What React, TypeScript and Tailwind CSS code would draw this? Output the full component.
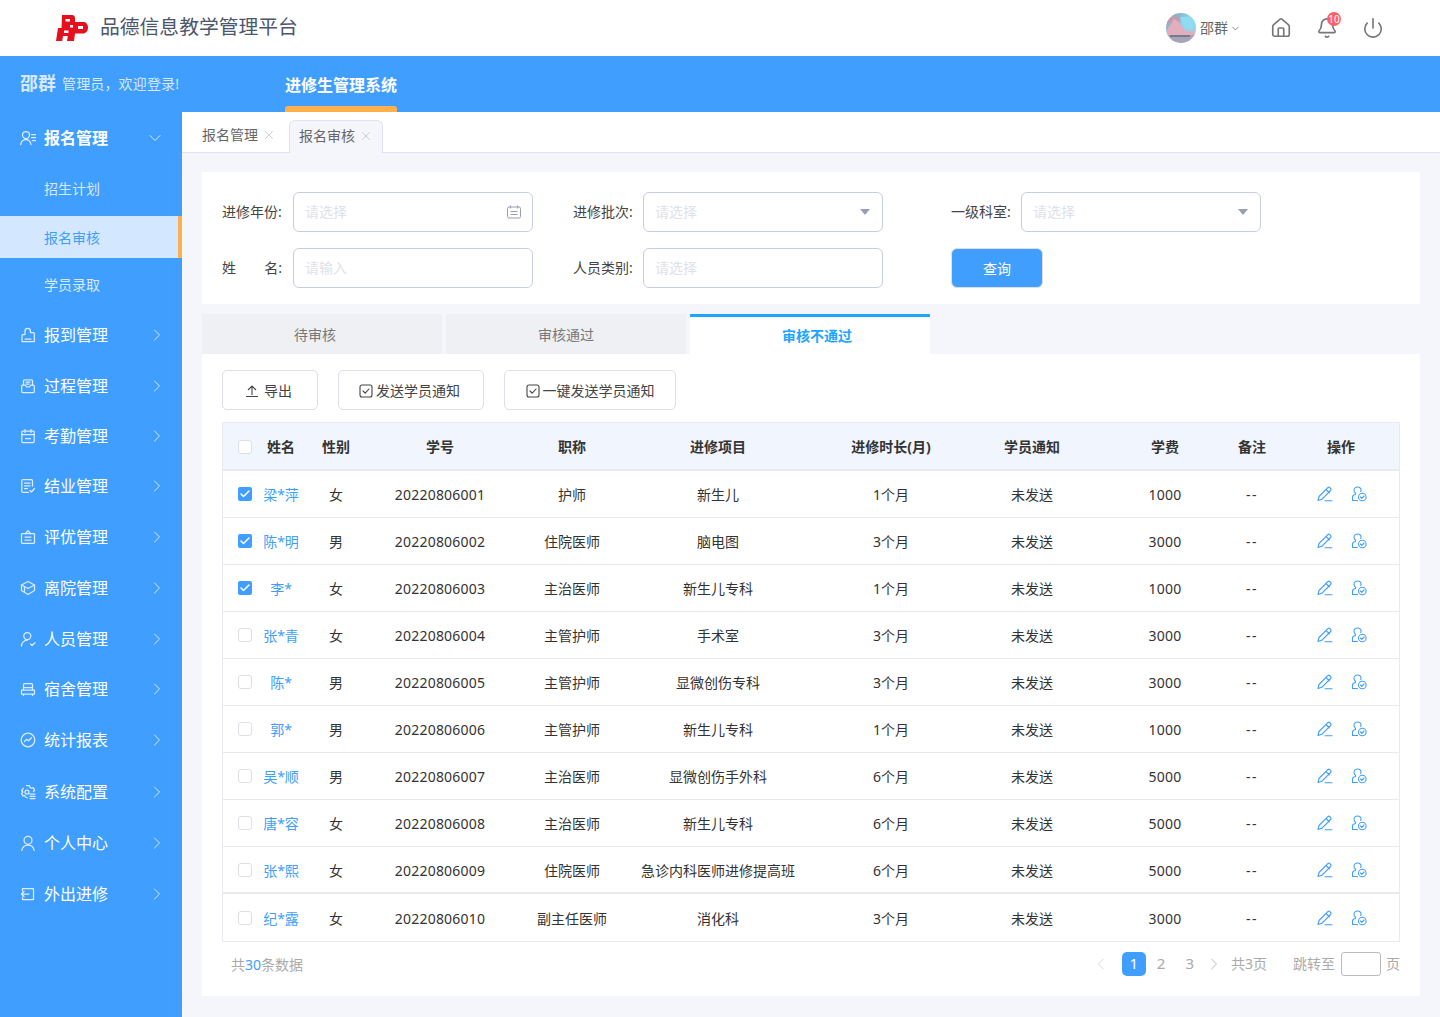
import React from "react";
import { House, Bell, Power, ChevronRight, ChevronDown, X, Check } from "lucide-react";

const grid = "grid grid-cols-[14px_58px_52px_156px_108px_184px_162px_120px_146px_28px_1fr] items-center pl-[15px] text-center";

const rows = [
  ["梁*萍", "女", "20220806001", "护师", "新生儿", "1个月", "未发送", "1000", true],
  ["陈*明", "男", "20220806002", "住院医师", "脑电图", "3个月", "未发送", "3000", true],
  ["李*", "女", "20220806003", "主治医师", "新生儿专科", "1个月", "未发送", "1000", true],
  ["张*青", "女", "20220806004", "主管护师", "手术室", "3个月", "未发送", "3000", false],
  ["陈*", "男", "20220806005", "主管护师", "显微创伤专科", "3个月", "未发送", "3000", false],
  ["郭*", "男", "20220806006", "主管护师", "新生儿专科", "1个月", "未发送", "1000", false],
  ["吴*顺", "男", "20220806007", "主治医师", "显微创伤手外科", "6个月", "未发送", "5000", false],
  ["唐*容", "女", "20220806008", "主治医师", "新生儿专科", "6个月", "未发送", "5000", false],
  ["张*熙", "女", "20220806009", "住院医师", "急诊内科医师进修提高班", "6个月", "未发送", "5000", false],
  ["纪*露", "女", "20220806010", "副主任医师", "消化科", "3个月", "未发送", "3000", false],
] as const;

type IconProps = { d: React.ReactNode };
const SideIcon = ({ d }: IconProps) => (
  <svg viewBox="0 0 16 16" className="h-4 w-4 shrink-0 text-[#dcecff]" fill="none" stroke="currentColor" strokeWidth="1.250" strokeLinecap="round" strokeLinejoin="round">
    {d}
  </svg>
);

const icons: Record<string, React.ReactNode> = {
  报到管理: <path d="M2 14.500V8.500c0-.5.4-.9.9-.9H5V4a2.700 2.700 0 0 1 5.400 0v1.500h3c.5 0 .9.4.9.9v8.100zM5 12h6" />,
  过程管理: <><path d="M3.500 7V2.800c0-.6.5-1 1-1h7c.5 0 1 .4 1 1V7" /><path d="M1.700 8c0-.6.5-1 1-1h2.500l1.300 1.800h3L10.800 7h2.500c.5 0 1 .4 1 1v5.500c0 .6-.5 1-1 1H2.700c-.5 0-1-.4-1-1z" /><path d="M6 4.200h4M6 6h3" /></>,
  考勤管理: <><rect x="1.800" y="3" width="12.400" height="11.500" rx="1" /><path d="M1.800 6.500h12.400M5 1.500v3M11 1.500v3M5.500 10.500h5" /></>,
  结业管理: <><path d="M12.500 8V2.800c0-.7-.5-1.200-1.200-1.200H3c-.7 0-1.200.5-1.200 1.200v10.400c0 .7.500 1.200 1.200 1.200h5.500" /><path d="M4.500 5h5.500M4.500 7.800h5.500M4.500 10.600h3M10 12.500l1.500 1.500 3-3.500" /></>,
  评优管理: <><rect x="1.500" y="4.500" width="13" height="9.800" rx=".8" /><path d="M5.500 4.500 8 1.700l2.500 2.800M5 8h6M5 11h6" /></>,
  离院管理: <><path d="M8 1.500 14.500 5 8 8.500 1.500 5z" /><path d="M1.500 5v5.500L8 14.500l6.500-4V5M4.500 7v4" /></>,
  人员管理: <><circle cx="7.300" cy="5" r="3.500" /><path d="M1.500 15c0-3.200 2.600-5.800 5.800-5.800M10.500 13l1.500 1.500 3-2.800" /></>,
  宿舍管理: <><path d="M3.500 9V3.500c0-.6.400-1 1-1h7c.6 0 1 .4 1 1V9" /><path d="M1.500 9.500c0-.3.200-.5.500-.5h12c.3 0 .5.200.5.500V13h-13zM3.500 13v1.500M12.500 13v1.500M3.500 6.500h9" /></>,
  统计报表: <><circle cx="8" cy="8" r="6.800" /><path d="m4.500 9.500 2.200-2.200 1.800 1.500 3-3" /></>,
  系统配置: <><path d="M6.500 1.700h3l.5 1.800 1.700.8 1.700-.6 1.300 2.300-1.300 1.500M3.300 4.300 1.600 6.500l1.300 1.500-1.300 1.600 1.300 2.300 1.700-.4.900 1.500 1.800.8" /><circle cx="7" cy="8" r="2" /><path d="M10 10.200h5M10 12.400h5M10 14.600h5" /></>,
  个人中心: <><circle cx="8" cy="5.300" r="4" /><path d="M1.800 15.500c.5-3.500 3-5.500 6.200-5.500s5.700 2 6.200 5.500" /></>,
  外出进修: <><path d="M2.500 5V2.500h11v11h-11V11" /><path d="M9 8H1.500M4 5.500 1.500 8 4 10.500" /></>,
};

const menu: [string, string][] = [
  ["报到管理", "h-[50px]"],
  ["过程管理", "h-[51px]"],
  ["考勤管理", "h-[50px]"],
  ["结业管理", "h-[50px]"],
  ["评优管理", "h-[51px]"],
  ["离院管理", "h-[51px]"],
  ["人员管理", "h-[51px]"],
  ["宿舍管理", "h-[50px]"],
  ["统计报表", "h-[52px]"],
  ["系统配置", "h-[51px]"],
  ["个人中心", "h-[51px]"],
  ["外出进修", "h-[51px]"],
];

const Logo = () => (
  <svg viewBox="0 0 32 26" className="h-[26px] w-8 shrink-0">
    <path d="M6 0h10c2 0 3 1.500 3 3.500V7h8c3 0 5 2 5 5.500s-2 6-5 6h-8l-1 7.500h-7l.8-5H7l-.8 5H0l2-13h3.500z" fill="#e60f1e" />
    <rect x="9.500" y="4" width="4.500" height="2.500" fill="#fff" />
    <rect x="8" y="15.500" width="4.500" height="2.500" fill="#fff" />
    <rect x="22" y="11" width="5" height="3" fill="#fff" />
    <rect x="14" y="10" width="3" height="2.500" fill="#fff" />
  </svg>
);

const Avatar = () => (
  <svg viewBox="0 0 30 30" className="h-[30px] w-[30px] shrink-0">
    <defs>
      <linearGradient id="av" x1="0" y1="0" x2="1" y2="1">
        <stop offset="0" stopColor="#8d8fa8" />
        <stop offset=".45" stopColor="#8fd3ec" />
        <stop offset="1" stopColor="#c9bcd0" />
      </linearGradient>
      <clipPath id="avc"><circle cx="15" cy="15" r="15" /></clipPath>
    </defs>
    <g clipPath="url(#avc)">
      <rect width="30" height="30" fill="url(#av)" />
      <path d="M0 4h14v6H0z" fill="#c39bad" />
      <path d="M14 4h16v12H19z" fill="#8fdcf0" />
      <path d="M0 19 8 6l5 3 6 9 11 2v3H0z" fill="#e3aebb" />
      <path d="M0 22h30v8H0z" fill="#a9a3b8" />
      <path d="M4 22h20v2H4z" fill="#77798f" />
    </g>
  </svg>
);

const Caret = () => <span className="mr-px h-0 w-0 border-x-[5px] border-t-[6px] border-x-transparent border-t-[#9a9db3]" />;

const Field = ({ label, ph, suffix, w = "w-[62px]" }: { label: React.ReactNode; ph: string; suffix?: React.ReactNode; w?: string }) => (
  <div className="flex items-center">
    <div className={`${w} mr-2 shrink-0 text-sm text-[#444]`}>{label}</div>
    <div className="flex h-10 w-60 items-center justify-between rounded-md border border-[#c9cedf] pl-[11px] pr-[11px]">
      <span className="text-sm text-[#dfe1ea]">{ph}</span>
      {suffix}
    </div>
  </div>
);

const SquareTick = () => (
  <svg viewBox="0 0 14 14" className="h-[14px] w-[14px] shrink-0" fill="none" stroke="#444" strokeWidth="1.100" strokeLinecap="round" strokeLinejoin="round">
    <rect x="1" y="1" width="12" height="12" rx="2" />
    <path d="m4 7 2.200 2.200L10 5" />
  </svg>
);

const Tool = ({ w, children }: { w: string; children: React.ReactNode }) => (
  <div className={`${w} flex h-10 items-center justify-center rounded-[5px] border border-[#dcdfe6] text-sm text-[#444]`}>{children}</div>
);

const EditIcon = () => (
  <svg viewBox="0 0 16 16" className="h-4 w-4" fill="none" stroke="#409eff" strokeWidth="1.100" strokeLinecap="round" strokeLinejoin="round">
    <path d="M1 14.500 2 10.500 10.800 1.700c.6-.6 1.400-.6 2 0l.8.8c.6.600.6 1.400 0 2L4.800 13.300zM9 3.500l3.300 3.300M8 14.700h7" />
  </svg>
);

const AuditIcon = () => (
  <svg viewBox="0 0 16 16" className="h-4 w-4" fill="none" stroke="#409eff" strokeWidth="1.100" strokeLinecap="round" strokeLinejoin="round">
    <path d="M6.500 14.500H1.500v-3.500c0-1.300 1.200-2.200 3-2.500V7.200C3.500 6.400 3 5.300 3 4.200 3 2.400 4.600 1 6.500 1s3.500 1.400 3.500 3.200c0 .5-.1 1-.3 1.300" />
    <circle cx="11.300" cy="11" r="3.800" />
    <path d="m9.500 11 1.300 1.300 2.200-2.300" />
  </svg>
);

export default function App() {
  return (
    <div className="flex min-h-[1017px] flex-col bg-[#f4f6fb] font-['Noto_Sans','Noto_Sans_CJK_SC',sans-serif] text-[#333]">
      <header className="flex h-14 items-center bg-white pl-14 pr-[56px]">
        <Logo />
        <span className="ml-3 pb-[2px] text-[19.800px] leading-none text-[#4c566e]">品德信息教学管理平台</span>
        <div className="ml-auto flex items-center text-[#777]">
          <Avatar />
          <span className="ml-1 text-sm text-[#666]">邵群</span>
          <ChevronDown className="ml-[2px] h-[11px] w-[11px] text-[#555]" strokeWidth={1.500} />
          <House className="ml-[29px] h-[22px] w-[22px]" strokeWidth={1.800} />
          <div className="relative ml-6 h-[22px] w-[22px]">
            <Bell className="h-[22px] w-[22px]" strokeWidth={1.800} />
            <span className="absolute -right-[3px] -top-[5px] flex h-[14px] w-[14px] items-center justify-center rounded-full bg-[#ff5f6b] text-[10px] leading-none text-white">10</span>
          </div>
          <Power className="ml-6 h-[22px] w-[22px]" strokeWidth={1.800} />
        </div>
      </header>

      <div className="flex h-14 items-center bg-[#409eff] pl-5">
        <span className="w-9 pb-[3px] text-lg font-bold leading-none text-[#d6e9ff]">邵群</span>
        <span className="ml-[6px] w-[223px] text-sm tracking-[0.150px] text-[#d6e9ff]">管理员，欢迎登录!</span>
        <div className="relative flex h-14 w-28 items-center justify-center">
          <span className="pt-[2px] text-base font-bold text-white">进修生管理系统</span>
          <span className="absolute bottom-0 left-0 h-[6px] w-full rounded-t-[3px] bg-[#ffb04c]" />
        </div>
      </div>

      <div className="flex flex-1">
        <aside className="w-[182px] shrink-0 bg-[#409eff] text-white">
          <div className="flex h-[52px] items-center pl-5 pr-[17px]">
            <svg viewBox="0 0 16 16" className="h-4 w-4 shrink-0 text-[#dcecff]" fill="none" stroke="currentColor" strokeWidth="1.250" strokeLinecap="round">
              <circle cx="6" cy="5" r="3.500" />
              <path d="M.7 14.500c.4-3 2.500-5 5.300-5s4.500 2 5 5M11.500 4.500h4M11.500 7.500h4M12.500 10.500h3" />
            </svg>
            <span className="ml-2 text-base font-bold">报名管理</span>
            <ChevronDown className="ml-auto h-5 w-5 text-[#d6e9ff]" strokeWidth={1.200} />
          </div>
          <div className="mb-[2px] flex h-[50px] items-center pl-11 text-sm text-[#d6e9ff]">招生计划</div>
          <div className="flex h-[42px] items-center border-r-4 border-[#ffb04c] bg-[#d3e8ff] pl-11 pt-[2px] text-sm text-[#409eff]">报名审核</div>
          <div className="flex h-[52px] items-center pl-11 pt-[2px] text-sm text-[#d6e9ff]">学员录取</div>
          {menu.map(([m, h]) => (
            <div key={m} className={`${h} flex items-center pl-5 pr-[15px]`}>
              <SideIcon d={icons[m]} />
              <span className="ml-2 text-base">{m}</span>
              <ChevronRight className="ml-auto h-5 w-5 text-[#d6e9ff]" strokeWidth={1.200} />
            </div>
          ))}
        </aside>

        <main className="min-w-0 flex-1">
          <div className="flex h-[41px] items-end border-b border-[#dfe3ee] bg-white pl-5 text-sm text-[#666]">
            <div className="mr-[13px] flex h-8 items-center gap-[4px] pb-[2px]">
              报名管理
              <X className="h-[14px] w-[14px] text-[#bbb]" strokeWidth={1.200} />
            </div>
            <div className="-mb-px flex h-[33px] w-[94px] items-center justify-center gap-[4px] rounded-t-md border border-b-0 border-[#dfe3ee] bg-[#f4f6fb] pb-[3px]">
              报名审核
              <X className="h-[14px] w-[14px] text-[#bbb]" strokeWidth={1.200} />
            </div>
          </div>

          <div className="mx-5 mt-[19px] bg-white">
            <div className="flex h-[132px] flex-col gap-4 pl-5 pt-5">
              <div className="flex">
                <Field
                  w="w-[63px]"
                  label="进修年份:"
                  ph="请选择"
                  suffix={
                    <svg viewBox="0 0 14 14" className="h-[14px] w-[14px]" fill="none" stroke="#9a9db3" strokeWidth="1">
                      <rect x=".5" y="2" width="13" height="11" rx="1.500" />
                      <path d="M3.500 .5v3M10.500 .5v3M3.500 6.500h7M3.500 9.500h7" />
                    </svg>
                  }
                />
                <div className="ml-10"><Field label="进修批次:" ph="请选择" suffix={<Caret />} /></div>
                <div className="ml-[68px]"><Field label="一级科室:" ph="请选择" suffix={<Caret />} /></div>
              </div>
              <div className="flex">
                <Field
                  w="w-[63px]"
                  label={
                    <span className="flex justify-between pr-[3px]">
                      <span>姓</span>
                      <span>名:</span>
                    </span>
                  }
                  ph="请输入"
                />
                <div className="ml-10"><Field label="人员类别:" ph="请选择" /></div>
                <div className="ml-[68px] flex h-10 w-[92px] items-center justify-center rounded-md border border-[#dcdfe6] bg-[#409eff] pt-[2px] text-sm text-white">查询</div>
              </div>
            </div>
          </div>

          <div className="mx-5 mt-[10px] flex h-10 gap-1 text-sm">
            <div className="flex w-60 items-center justify-center bg-[#eef0f4] pr-[14px] pt-[2px] text-[#777]">待审核</div>
            <div className="flex w-60 items-center justify-center bg-[#eef0f4] pt-[2px] text-[#777]">审核通过</div>
            <div className="flex w-60 items-center justify-center border-t-[3px] border-[#1ea5ff] bg-white pl-[14px] font-bold text-[#1ea5ff]">审核不通过</div>
          </div>

          <div className="mx-5 bg-white px-5 pb-5 pt-4">
            <div className="flex gap-5">
              <Tool w="w-24">
                <span className="flex items-center pr-[3px] pt-[1px]">
                  <svg viewBox="0 0 14 14" className="mr-[5px] h-[14px] w-[14px]" fill="none" stroke="#444" strokeWidth="1.100">
                    <path d="M7 11V2M3 6l4-4 4 4M1 12.500h12" />
                  </svg>
                  导出
                </span>
              </Tool>
              <Tool w="w-[146px]"><span className="flex items-center pr-[3px] pt-[1px]"><SquareTick /><span className="ml-[3px]">发送学员通知</span></span></Tool>
              <Tool w="w-[172px]"><span className="flex items-center pt-[1px]"><SquareTick /><span className="ml-[3px]">一键发送学员通知</span></span></Tool>
            </div>

            <div className="mt-3 border border-[#e8eaef] text-sm">
              <div className={`${grid} h-[48px] border-b-[2px] border-[#e8eaef] bg-[#f1f6fe] font-bold text-[#333]`}>
                <span className="mt-[2px] h-[14px] w-[14px] rounded-[3px] border border-[#dcdfe6] bg-white" />
                <span className="pt-[2px]">姓名</span>
                <span className="pt-[2px]">性别</span>
                <span className="pt-[2px]">学号</span>
                <span className="pt-[2px]">职称</span>
                <span className="pt-[2px]">进修项目</span>
                <span className="pt-[2px]">进修时长(月)</span>
                <span className="pt-[2px]">学员通知</span>
                <span className="pt-[2px]">学费</span>
                <span className="pt-[2px]">备注</span>
                <span className="pl-[17px] pt-[2px]">操作</span>
              </div>
              {rows.map((r, i) => (
                <div key={r[2]} className={`${grid} ${i === 8 ? "h-[47px] border-b-[2px]" : i === 9 ? "h-[47px]" : "h-[47px] border-b"} border-[#e8eaef] text-[#333]`}>
                  {r[8] ? (
                    <span className="flex h-[14px] w-[14px] items-center justify-center rounded-[2px] bg-[#409eff]">
                      <Check className="h-3 w-3 text-white" strokeWidth={3} />
                    </span>
                  ) : (
                    <span className="h-[14px] w-[14px] rounded-[3px] border border-[#dcdfe6] bg-white" />
                  )}
                  <span className="pt-[2px] text-[#409eff]">{r[0]}</span>
                  <span className="pt-[2px]">{r[1]}</span>
                  <span className="pt-[2px] tracking-[0.200px]">{r[2]}</span>
                  <span className="pt-[2px]">{r[3]}</span>
                  <span className="pt-[2px]">{r[4]}</span>
                  <span className="pt-[2px]">{r[5]}</span>
                  <span className="pt-[2px]">{r[6]}</span>
                  <span className="pt-[2px] tracking-[0.200px]">{r[7]}</span>
                  <span className="pt-[2px] tracking-[1.500px]">--</span>
                  <span className="flex gap-[18px] pl-[51px]">
                    <EditIcon />
                    <AuditIcon />
                  </span>
                </div>
              ))}
            </div>

            <div className="mt-[10px] flex h-6 items-center pl-[9px] text-sm text-[#aaa]">
              <span className="pt-[2px]">共<span className="text-[#409eff]">30</span>条数据</span>
              <ChevronRight className="ml-auto h-5 w-5 rotate-180 text-[#ddd]" strokeWidth={1.200} />
              <span className="ml-[11px] flex h-6 w-6 items-center justify-center rounded-[5px] bg-[#409eff] text-[15px] text-white">1</span>
              <span className="ml-[11px] text-[15px]">2</span>
              <span className="ml-5 text-[15px]">3</span>
              <ChevronRight className="ml-[10px] h-5 w-5 text-[#bbb]" strokeWidth={1.200} />
              <span className="ml-[7px]">共3页</span>
              <span className="ml-[26px]">跳转至</span>
              <span className="ml-[6px] h-6 w-10 rounded-[3px] border border-[#bbb]" />
              <span className="ml-[5px]">页</span>
            </div>
          </div>
        </main>
      </div>
    </div>
  );
}
